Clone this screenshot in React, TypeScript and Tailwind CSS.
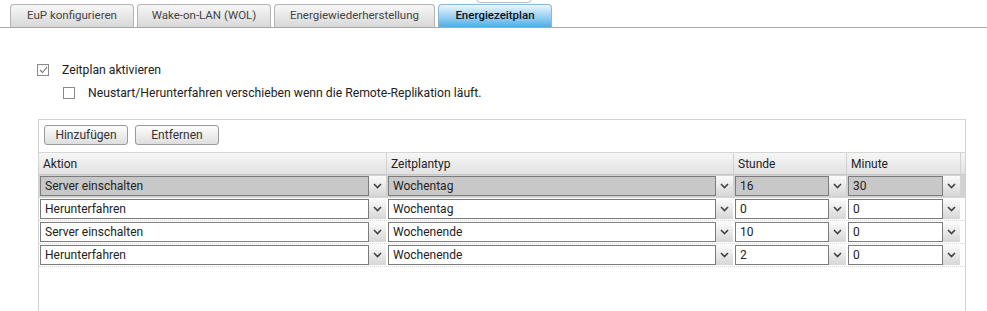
import React from 'react';

type Row = { aktion: string; typ: string; stunde: string; minute: string; selected?: boolean };

const rows: Row[] = [
  { aktion: 'Server einschalten', typ: 'Wochentag', stunde: '16', minute: '30', selected: true },
  { aktion: 'Herunterfahren', typ: 'Wochentag', stunde: '0', minute: '0' },
  { aktion: 'Server einschalten', typ: 'Wochenende', stunde: '10', minute: '0' },
  { aktion: 'Herunterfahren', typ: 'Wochenende', stunde: '2', minute: '0' },
];

const Chevron = () => (
  <svg width="9" height="6" viewBox="0 0 9 6">
    <path d="M1 1 L4.5 4.5 L8 1" fill="none" stroke="#444" strokeWidth="1.6" />
  </svg>
);

const Select = ({ value, selected }: { value: string; selected?: boolean }) => (
  <div className="flex h-[20px] items-stretch px-[1px]">
    <div
      className={`flex-1 flex items-center pl-[4px] border border-[#7b7b7b] text-[#222] ${
        selected ? 'bg-[#c8c8c8]' : 'bg-white'
      }`}
    >
      {value}
    </div>
    <div className="w-[17px] flex items-center justify-center bg-gradient-to-b from-[#fbfbfb] to-[#d6d6d6]">
      <Chevron />
    </div>
  </div>
);

const Tab = ({ label, w, active }: { label: string; w: string; active?: boolean }) => (
  <div
    className={`${w} h-[23px] flex items-center justify-center rounded-t-[4px] border border-b-0 ${
      active
        ? 'border-[#8ab8d6] bg-gradient-to-b from-[#eaf6fd] to-[#4aaee6] text-[#111] font-medium'
        : 'border-[#b4b4b4] bg-gradient-to-b from-[#f7f7f7] to-[#d8d8d8] text-[#444]'
    }`}
  >
    {label}
  </div>
);

const Checkbox = ({ checked }: { checked?: boolean }) => (
  <div className="w-[12px] h-[12px] border border-[#8a8a8a] bg-white flex items-center justify-center">
    {checked && (
      <svg width="9" height="8" viewBox="0 0 9 8">
        <path d="M1 4 L3.5 6.5 L8 1.2" fill="none" stroke="#777" strokeWidth="1.1" />
      </svg>
    )}
  </div>
);

const cols = 'grid-cols-[348px_347px_113px_114px_4px]';

export default function App() {
  return (
    <div className="relative w-[987px] h-[311px] overflow-hidden bg-white font-['Roboto',sans-serif] text-[12px] text-[#333]">
      <div className="absolute left-[476px] top-[-6px] w-[56px] h-[9px] rounded-b-[4px] border border-[#bbb]" />

      <div className="flex items-end gap-[3px] h-[28px] pl-[10px] border-b border-[#a8a8a8] text-[11.5px]">
        <Tab label="EuP konfigurieren" w="w-[124px]" />
        <Tab label="Wake-on-LAN (WOL)" w="w-[134px]" />
        <Tab label="Energiewiederherstellung" w="w-[161px]" />
        <Tab label="Energiezeitplan" w="w-[114px]" active />
      </div>

      <div className="pt-[36px] pl-[37px]">
        <div className="flex items-center gap-[13px] h-[12px]">
          <Checkbox checked />
          <span className="text-[#222] text-[12.2px]">Zeitplan aktivieren</span>
        </div>
        <div className="flex items-center gap-[13px] h-[12px] mt-[11px] ml-[26px]">
          <Checkbox />
          <span className="text-[#222] text-[12.2px]">Neustart/Herunterfahren verschieben wenn die Remote-Replikation läuft.</span>
        </div>

        <div className="mt-[20px] ml-[1px] w-[928px] h-[200px] border border-[#d2d2d2]">
          <div className="flex gap-[7px] pl-[5px] pt-[5px] h-[32px]">
            {['Hinzufügen', 'Entfernen'].map((b) => (
              <div
                key={b}
                className="w-[84px] h-[20px] flex items-center justify-center rounded-[3px] border border-[#9a9a9a] bg-gradient-to-b from-[#fdfdfd] to-[#dedede] text-[#333]"
              >
                {b}
              </div>
            ))}
          </div>

          <div className={`grid ${cols} h-[23px] bg-gradient-to-b from-[#f6f6f6] to-[#e2e2e2] border-t border-[#d6d6d6] border-b border-b-[#c9c9c9]`}>
            {['Aktion', 'Zeitplantyp', 'Stunde', 'Minute', ''].map((h, i) => (
              <div key={i} className="flex items-center pl-[4px] pt-[1px] border-r border-[#d2d2d2] text-[#222]">
                {h}
              </div>
            ))}
          </div>

          {rows.map((r, i) => (
            <div
              key={i}
              className={`grid ${cols} h-[23px] items-center border-b border-dotted border-[#d9d9d9] ${
                r.selected ? 'bg-[#d2d2d2]' : 'bg-white'
              }`}
            >
              <Select value={r.aktion} selected={r.selected} />
              <Select value={r.typ} selected={r.selected} />
              <Select value={r.stunde} selected={r.selected} />
              <Select value={r.minute} selected={r.selected} />
              <div />
            </div>
          ))}
        </div>
      </div>
    </div>
  );
}
